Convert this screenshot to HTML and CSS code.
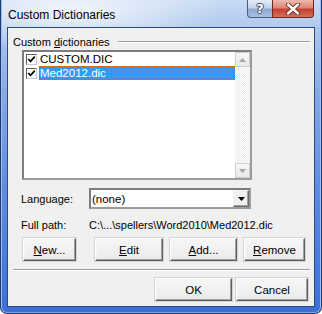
FILE: index.html
```html
<!DOCTYPE html>
<html>
<head>
<meta charset="utf-8">
<link rel="stylesheet" href="styles.css">
</head>
<body>
<div class="window">
  <div class="titlebar">
    <div class="title">Custom Dictionaries</div>
    <div class="caption-btns">
      <div class="cap help"><span>?</span></div>
      <div class="cap close">
        <svg width="16" height="12" viewBox="0 0 16 12"><path d="M3 1.5 L13 10.5 M13 1.5 L3 10.5" stroke="#5a2a24" stroke-width="4.2" stroke-linecap="round"/><path d="M3 1.5 L13 10.5 M13 1.5 L3 10.5" stroke="#fff" stroke-width="2.4" stroke-linecap="round"/></svg>
      </div>
    </div>
  </div>
  <div class="client">
    <div class="group-head"><span>Custom <u>d</u>ictionaries</span><span class="rule"></span></div>
    <div class="listbox">
      <div class="items">
        <div class="item">
          <span class="check"><svg width="9" height="9" viewBox="0 0 9 9"><path d="M1.3 4 L3.5 6.4 L7.8 1.6" fill="none" stroke="#000" stroke-width="1.7"/></svg></span>
          <span class="label">CUSTOM.DIC</span>
        </div>
        <div class="item">
          <span class="check"><svg width="9" height="9" viewBox="0 0 9 9"><path d="M1.3 4 L3.5 6.4 L7.8 1.6" fill="none" stroke="#000" stroke-width="1.7"/></svg></span>
          <span class="label selected">Med2012.dic</span>
        </div>
      </div>
      <div class="scrollbar">
        <div class="sbtn"><svg width="7" height="4" viewBox="0 0 7 4"><path d="M0 4 L3.5 0 L7 4 Z" fill="#a6a6a6"/></svg></div>
        <div class="track"></div>
        <div class="sbtn"><svg width="7" height="4" viewBox="0 0 7 4"><path d="M0 0 L3.5 4 L7 0 Z" fill="#a6a6a6"/></svg></div>
      </div>
    </div>
    <div class="field-row lang">
      <span class="flabel">Lan<u>g</u>uage:</span>
      <div class="combo">
        <span class="combo-text">(none)</span>
        <span class="combo-btn"><svg width="7" height="4" viewBox="0 0 7 4"><path d="M0 0 L3.5 4 L7 0 Z" fill="#000"/></svg></span>
      </div>
    </div>
    <div class="field-row path">
      <span class="flabel">Full path:</span>
      <span class="pval">C:\...\spellers\Word2010\Med2012.dic</span>
    </div>
    <div class="btnrow">
      <div class="btn b-new"><u>N</u>ew...</div>
      <div class="btn b-edit"><u>E</u>dit</div>
      <div class="btn b-add"><u>A</u>dd...</div>
      <div class="btn b-remove"><u>R</u>emove</div>
    </div>
    <div class="sep"></div>
    <div class="okrow">
      <div class="btn b-ok">OK</div>
      <div class="btn b-cancel">Cancel</div>
    </div>
  </div>
</div>
</body>
</html>
```

FILE: styles.css
```css
* { box-sizing: border-box; }
html, body { margin: 0; padding: 0; }
body {
  width: 322px;
  height: 314px;
  overflow: hidden;
  background: #ffffff;
  font-family: "Liberation Sans", Arial, sans-serif;
  font-size: 11px;
  color: #000;
}
u { text-decoration: underline; text-underline-offset: 1px; }

.window {
  width: 322px;
  height: 314px;
  display: flex;
  flex-direction: column;
  padding: 0 6px 6px 6px;
  border: 1px solid #1d3a74;
  border-top: 0;
  border-radius: 0 0 7px 7px;
  background:
    radial-gradient(ellipse 150px 40px at 70px 12px, rgba(255,255,255,0.8), rgba(255,255,255,0) 100%),
    linear-gradient(180deg, #cadcf4 0%, #abc6ed 10%, #86a9e4 30%, #5e8de0 60%, #3d6fd8 100%);
  box-shadow: inset 1px 0 #9fbdee, inset -1px 0 #9fbdee, inset 0 -1px #7fa2e6;
}

.titlebar {
  height: 27px;
  flex: none;
  display: flex;
}
.title {
  align-self: center;
  font-size: 12px;
  padding-left: 1px;
  margin-top: 2px;
  color: #000;
}
.caption-btns {
  margin-left: auto;
  margin-right: 1px;
  display: flex;
  height: 18px;
}
.cap {
  height: 18px;
  display: flex;
  align-items: center;
  justify-content: center;
  border: 1px solid #4a5d80;
  border-top: 0;
}
.help {
  width: 25px;
  border-right: 0;
  border-radius: 0 0 0 4px;
  background: linear-gradient(180deg, #e4ecf7 0%, #c4d3ea 45%, #8fa8d2 55%, #a8bfe3 100%);
}
.help span {
  font-family: "DejaVu Sans", sans-serif;
  font-weight: bold;
  font-size: 13px;
  color: #fff;
  text-shadow: -1px 0 #3d4a63, 1px 0 #3d4a63, 0 -1px #3d4a63, 0 1px #3d4a63;
  margin-top: -1px;
}
.close {
  width: 42px;
  border-radius: 0 0 4px 0;
  border-color: #6a2a24;
  background: linear-gradient(180deg, #f0b9ae 0%, #dc8676 45%, #c4402e 55%, #d5705c 100%);
}

.client {
  flex: 1;
  background: #f0f0f0;
  border: 1px solid #2c4a7e;
  display: flex;
  flex-direction: column;
}

.group-head {
  margin: 7px 4px 0 5px;
  height: 13px;
  display: flex;
  align-items: center;
  gap: 8px;
}
.rule {
  flex: 1;
  height: 2px;
  border-top: 1px solid #a0a0a0;
  border-bottom: 1px solid #ffffff;
}

.listbox {
  margin: 2px 0 0 14px;
  width: 230px;
  height: 130px;
  border: 2px solid;
  border-color: #7d7d7d #9c9c9c #9c9c9c #7d7d7d;
  background: #fff;
  display: flex;
}
.items {
  flex: 1;
  display: flex;
  flex-direction: column;
}
.item {
  height: 14px;
  display: flex;
  align-items: center;
  padding-left: 2px;
}
.check {
  width: 11px;
  height: 11px;
  border: 1px solid;
  border-color: #5e5e5e #c8c8c8 #c8c8c8 #5e5e5e;
  background: #fff;
  display: flex;
  align-items: center;
  justify-content: center;
}
.label {
  flex: 1;
  margin-left: 2px;
  padding-left: 1px;
  height: 14px;
  line-height: 14px;
  font-size: 11.5px;
}
.selected {
  background: #3399ff;
  color: #fff;
  outline: 1px dotted #cc6600;
  outline-offset: -1px;
}

.scrollbar {
  width: 15px;
  display: flex;
  flex-direction: column;
  background: repeating-conic-gradient(#ffffff 0 25%, #ebebeb 0 50%) 0 0 / 2px 2px;
}
.sbtn {
  height: 15px;
  background: linear-gradient(180deg, #f7f7f7, #e9e9e9);
  border: 1px solid #cfcfcf;
  display: flex;
  align-items: center;
  justify-content: center;
}
.track { flex: 1; }

.field-row {
  display: flex;
  align-items: center;
  margin-left: 13px;
}
.flabel { width: 68px; flex: none; }
.lang { margin-top: 8px; height: 21px; }
.combo {
  width: 162px;
  height: 21px;
  border: 2px solid;
  border-color: #7d7d7d #9c9c9c #9c9c9c #7d7d7d;
  background: #fff;
  display: flex;
  align-items: center;
}
.combo-text { flex: 1; padding-left: 1px; font-size: 11.5px; }
.combo-btn {
  width: 16px;
  height: 17px;
  border: 1px solid;
  border-color: #f5f5f5 #696969 #696969 #f5f5f5;
  box-shadow: inset -1px -1px #a0a0a0;
  background: #f0f0f0;
  display: flex;
  align-items: center;
  justify-content: center;
}
.path { margin-top: 9px; height: 14px; }

.btn {
  height: 23px;
  display: flex;
  align-items: center;
  justify-content: center;
  border: 1px solid;
  border-color: #ffffff #5f5f5f #5f5f5f #ffffff;
  box-shadow: inset -1px -1px #a0a0a0, inset 1px 1px #f4f4f4;
  background: linear-gradient(180deg, #f6f6f6 0%, #ebebeb 100%);
  font-size: 11.5px;
  outline: 1px solid #d4d4d4;
  outline-offset: 0;
}
.btnrow {
  margin-top: 6px;
  height: 23px;
  display: flex;
  padding-left: 15px;
}
.b-new { width: 53px; }
.b-edit { width: 68px; margin-left: 19px; }
.b-add { width: 67px; margin-left: 7px; }
.b-remove { width: 61px; margin-left: 7px; }

.sep {
  margin: 8px 4px 0 5px;
  height: 2px;
  border-top: 1px solid #a0a0a0;
  border-bottom: 1px solid #ffffff;
}
.okrow {
  margin-top: 7px;
  height: 23px;
  display: flex;
  justify-content: flex-end;
  padding-right: 6px;
  gap: 4px;
}
.b-ok { width: 77px; }
.b-cancel { width: 72px; }
```
